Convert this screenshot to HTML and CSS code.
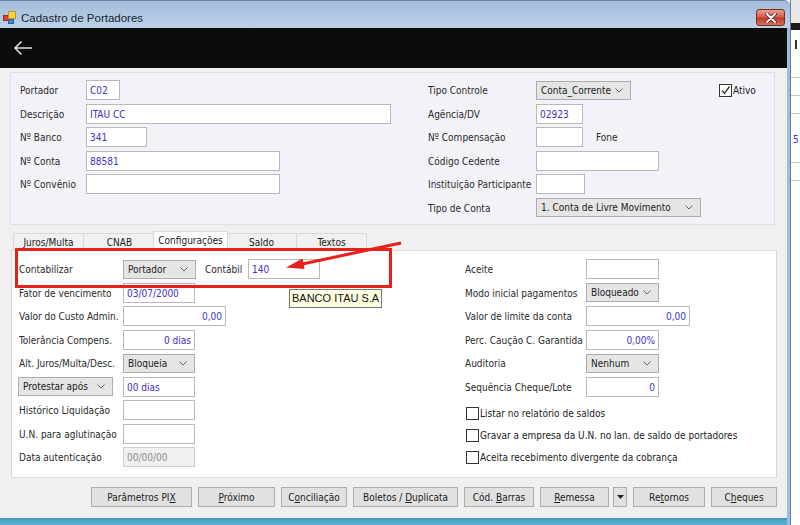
FILE: index.html
```html
<!DOCTYPE html>
<html lang="pt-BR">
<head>
<meta charset="utf-8">
<title>Cadastro de Portadores</title>
<link rel="stylesheet" href="styles.css">
</head>
<body>
<div class="screen">
  <div class="window">
    <div class="titlebar">
      <svg class="app-icon" width="13" height="13" viewBox="0 0 13 13">
        <rect x="0.5" y="4.5" width="5" height="5" fill="#d9412f" stroke="#9c2a1e"/>
        <rect x="5.5" y="0.5" width="7" height="7" fill="#f6d24a" stroke="#c79a1c"/>
        <rect x="5.5" y="8.5" width="5" height="4" fill="#4a86d6" stroke="#2c5ea6"/>
      </svg>
      <span class="title">Cadastro de Portadores</span>
      <div class="close-btn">
        <svg width="12" height="10" viewBox="0 0 12 10"><path d="M2 1 L10 9 M10 1 L2 9" stroke="#6b1d15" stroke-width="3.6" stroke-linecap="round"/><path d="M2 1 L10 9 M10 1 L2 9" stroke="#ffffff" stroke-width="2" stroke-linecap="round"/></svg>
      </div>
    </div>
    <div class="frame">
      <div class="toolbar">
        <svg class="back" width="20" height="16" viewBox="0 0 20 16"><path d="M19 8 H2 M8.5 1.5 L2 8 L8.5 14.5" fill="none" stroke="#dcdcdc" stroke-width="1.6"/></svg>
      </div>
      <div class="content">
        <div class="panel">
          <div class="pcol pleft">
            <label class="lbl">Portador</label><div class="in w34 val">C02</div>
            <label class="lbl">Descrição</label><div class="in w305 val">ITAU CC</div>
            <label class="lbl">Nº Banco</label><div class="in w61 val">341</div>
            <label class="lbl">Nº Conta</label><div class="in w194 val">88581</div>
            <label class="lbl">Nº Convênio</label><div class="in w194"></div>
          </div>
          <div class="pcol pright">
            <label class="lbl">Tipo Controle</label>
            <div class="inline">
              <div class="select w95"><span>Conta_Corrente</span><svg class="chev" width="8" height="5" viewBox="0 0 8 5"><path d="M0.5 0.5 L4 4 L7.5 0.5" fill="none" stroke="#666" stroke-width="1"/></svg></div>
              <div class="check ativo"><span class="cb"><svg width="11" height="11" viewBox="0 0 11 11"><path d="M2 5.5 L4.5 8.5 L9.5 1.5" fill="none" stroke="#333" stroke-width="1.3"/></svg></span><span>Ativo</span></div>
            </div>
            <label class="lbl">Agência/DV</label><div class="in w47 val">02923</div>
            <label class="lbl">Nº Compensação</label>
            <div class="inline"><div class="in w47"></div><span class="fone">Fone</span></div>
            <label class="lbl">Código Cedente</label><div class="in w123"></div>
            <label class="lbl">Instituição Participante</label><div class="in w49"></div>
            <label class="lbl">Tipo de Conta</label>
            <div class="select w165"><span>1. Conta de Livre Movimento</span><svg class="chev" width="8" height="5" viewBox="0 0 8 5"><path d="M0.5 0.5 L4 4 L7.5 0.5" fill="none" stroke="#666" stroke-width="1"/></svg></div>
          </div>
        </div>

        <div class="tabs">
          <div class="tab t1">Juros/Multa</div>
          <div class="tab t2">CNAB</div>
          <div class="tab t3 active">Configurações</div>
          <div class="tab t4">Saldo</div>
          <div class="tab t5">Textos</div>
        </div>

        <div class="tab-page">
          <div class="tcol tleft">
            <label class="lbl">Contabilizar</label>
            <div class="inline">
              <div class="select w73"><span>Portador</span><svg class="chev" width="8" height="5" viewBox="0 0 8 5"><path d="M0.5 0.5 L4 4 L7.5 0.5" fill="none" stroke="#666" stroke-width="1"/></svg></div>
              <span class="contabil">Contábil</span>
              <div class="in w72 val">140</div>
            </div>
            <label class="lbl">Fator de vencimento</label><div class="in w72 val">03/07/2000</div>
            <label class="lbl">Valor do Custo Admin.</label><div class="in w103 val right">0,00</div>
            <label class="lbl">Tolerância Compens.</label><div class="in w72 val right">0 dias</div>
            <label class="lbl">Alt. Juros/Multa/Desc.</label>
            <div class="select w72"><span>Bloqueia</span><svg class="chev" width="8" height="5" viewBox="0 0 8 5"><path d="M0.5 0.5 L4 4 L7.5 0.5" fill="none" stroke="#666" stroke-width="1"/></svg></div>
            <div class="select w95 protestar"><span>Protestar após</span><svg class="chev" width="8" height="5" viewBox="0 0 8 5"><path d="M0.5 0.5 L4 4 L7.5 0.5" fill="none" stroke="#666" stroke-width="1"/></svg></div>
            <div class="in w72 val">00 dias</div>
            <label class="lbl">Histórico Liquidação</label><div class="in w72"></div>
            <label class="lbl">U.N. para aglutinação</label><div class="in w72"></div>
            <label class="lbl">Data autenticação</label><div class="in w72 disabled">00/00/00</div>
          </div>
          <div class="tcol tright">
            <div class="rgrid">
              <label class="lbl">Aceite</label><div class="in w73"></div>
              <label class="lbl">Modo inicial pagamentos</label>
              <div class="select w73"><span>Bloqueado</span><svg class="chev" width="8" height="5" viewBox="0 0 8 5"><path d="M0.5 0.5 L4 4 L7.5 0.5" fill="none" stroke="#666" stroke-width="1"/></svg></div>
              <label class="lbl">Valor de limite da conta</label><div class="in w104 val right">0,00</div>
              <label class="lbl">Perc. Caução C. Garantida</label><div class="in w73 val right">0,00%</div>
              <label class="lbl">Auditoria</label>
              <div class="select w73"><span>Nenhum</span><svg class="chev" width="8" height="5" viewBox="0 0 8 5"><path d="M0.5 0.5 L4 4 L7.5 0.5" fill="none" stroke="#666" stroke-width="1"/></svg></div>
              <label class="lbl">Sequência Cheque/Lote</label><div class="in w73 val right">0</div>
            </div>
            <div class="checks">
              <div class="check"><span class="cb"></span><span>Listar no relatório de saldos</span></div>
              <div class="check"><span class="cb"></span><span>Gravar a empresa da U.N. no lan. de saldo de portadores</span></div>
              <div class="check"><span class="cb"></span><span>Aceita recebimento divergente da cobrança</span></div>
            </div>
          </div>
        </div>

        <div class="buttons">
          <div class="btn b-pix"><span>Parâmetros PI<u>X</u></span></div>
          <div class="btn b-prox"><span><u>P</u>róximo</span></div>
          <div class="btn b-conc"><span>C<u>o</u>nciliação</span></div>
          <div class="btn b-bol"><span>Boletos / <u>D</u>uplicata</span></div>
          <div class="btn b-cod"><span>Cód. <u>B</u>arras</span></div>
          <div class="btn b-rem"><span><u>R</u>emessa</span></div>
          <div class="btn b-drop"><svg width="7" height="4" viewBox="0 0 7 4"><path d="M0 0 H7 L3.5 4 Z" fill="#222"/></svg></div>
          <div class="btn b-ret"><span>Re<u>t</u>ornos</span></div>
          <div class="btn b-che"><span>C<u>h</u>eques</span></div>
        </div>
      </div>
      <div class="bottom-edge"></div>
    </div>
  </div>
  <div class="behind">
    <div class="bh-top"></div>
    <div class="bh-glyph"></div>
    <div class="bh-line first"></div>
    <div class="bh-line"></div>
    <div class="bh-line"></div>
    <div class="bh-text">5</div>
    <div class="bh-line"></div>
    <div class="bh-line"></div>
  </div>

  <div class="annot-rect"></div>
  <svg class="annot-arrow" width="130" height="40" viewBox="280 235 130 40">
    <line x1="401" y1="243" x2="300" y2="264.5" stroke="#e8201c" stroke-width="3"/>
    <polygon points="286,267.5 302.5,258.5 304.5,269" fill="#e8201c"/>
  </svg>
  <div class="tooltip">BANCO ITAU S.A</div>
</div>
</body>
</html>
```

FILE: styles.css
```css
* { box-sizing: border-box; }
html, body { margin: 0; padding: 0; }
body {
  width: 800px;
  height: 525px;
  overflow: hidden;
  background: #ffffff;
  font-family: "DejaVu Sans Condensed", "Liberation Sans", Arial, sans-serif;
  font-size: 10px;
  color: #222;
}
.screen { position: relative; display: flex; width: 800px; height: 525px; }

.window { width: 790px; height: 525px; display: flex; flex-direction: column; flex: none; }

.titlebar {
  height: 28px;
  flex: none;
  display: flex;
  align-items: center;
  padding: 6px 0 0 3px;
  background: linear-gradient(#a2bcd9, #bcd2ea);
  border-top: 1px solid #6f8398;
  border-top-right-radius: 6px;
}
.app-icon { flex: none; }
.title {
  margin-left: 5px;
  font-family: "Liberation Sans", Arial, sans-serif;
  font-size: 11.5px;
  color: #1b2430;
}
.close-btn {
  margin-left: auto;
  margin-right: 5px;
  width: 29px;
  height: 17px;
  border: 1px solid #7c2c23;
  border-radius: 3px;
  background: linear-gradient(#e7a08f 0%, #d0624f 45%, #bf3a27 55%, #d5705c 100%);
  display: flex;
  align-items: center;
  justify-content: center;
}

.frame {
  flex: 1;
  display: flex;
  flex-direction: column;
  background: #f0f0f0;
  border-right: 3px solid #9dbde0;
}
.toolbar {
  height: 40px;
  flex: none;
  background: #0c0c0c;
  display: flex;
  align-items: center;
  padding-left: 13px;
}

.content { flex: 1; padding: 4px 10px 0 10px; display: flex; flex-direction: column; }

/* top panel */
.panel {
  height: 153px;
  width: 765px;
  flex: none;
  display: flex;
  padding: 7px 0 0 9px;
  background: #f2f2f8;
  border: 1px solid #dedee6;
}
.pcol { display: grid; grid-auto-rows: 20px; row-gap: 3.5px; align-items: center; }
.pleft { width: 408px; grid-template-columns: 66px 1fr; }
.pright { width: 330px; grid-template-columns: 108px 1fr; }

.lbl { color: #2a2a2a; white-space: nowrap; padding-top: 1px; }
.inline { display: flex; align-items: center; height: 20px; }

.in {
  height: 20px;
  background: #ffffff;
  border: 1px solid #b9b9b9;
  padding: 0 3px;
  line-height: 19px;
  white-space: nowrap;
  overflow: hidden;
}
.in.val { color: #3a33c8; }
.in.right { text-align: right; }
.in.disabled { background: #f0f0f0; border-color: #cfcfcf; color: #8d8d8d; }

.select {
  height: 19px;
  background: #e5e5e5;
  border: 1px solid #adadad;
  display: flex;
  align-items: center;
  padding: 0 7px 0 4px;
  white-space: nowrap;
  color: #222;
}
.select span { flex: 1; line-height: 16px; padding-top: 1px; }
.chev { flex: none; }

.w34 { width: 34px; } .w47 { width: 47px; } .w49 { width: 49px; } .w61 { width: 61px; }
.w72 { width: 72px; } .w73 { width: 73px; } .w95 { width: 95px; } .w103 { width: 103px; }
.w104 { width: 104px; } .w123 { width: 123px; } .w165 { width: 165px; } .w194 { width: 194px; }
.w305 { width: 305px; }

.check { display: flex; align-items: center; white-space: nowrap; color: #222; }
.cb {
  width: 13px; height: 13px; flex: none;
  border: 1px solid #333;
  background: #fff;
  margin-right: 1px;
  display: flex; align-items: center; justify-content: center;
}
.ativo { margin-left: 88px; }
.fone { margin-left: 13px; color: #2a2a2a; }

/* tabs */
.tabs { height: 25px; flex: none; display: flex; align-items: flex-end; padding-left: 3px; }
.tab {
  height: 17px;
  border: 1px solid #d9d9d9;
  border-bottom: none;
  background: #f0f0f0;
  display: flex;
  align-items: center;
  justify-content: center;
  margin-right: -1px;
  color: #222;
  padding-top: 1px;
}
.t1 { width: 71px; } .t2 { width: 73px; } .t4 { width: 71px; } .t5 { width: 71px; }
.tab.active {
  width: 75px;
  height: 20px;
  margin: 0 -2px -1px -2px;
  background: #ffffff;
  position: relative;
  z-index: 1;
  align-items: flex-start;
  padding-top: 3px;
}

.tab-page {
  margin-left: 1px;
  width: 766px;
  height: 228px;
  flex: none;
  background: #ffffff;
  border: 1px solid #d9d9d9;
  padding: 8px 0 0 7px;
  display: flex;
}
.tcol { display: flex; flex-direction: column; }
.tleft {
  width: 446px;
  display: grid;
  grid-template-columns: 104px 1fr;
  grid-auto-rows: 20px;
  row-gap: 3.5px;
  align-items: center;
  align-content: start;
}
.rgrid {
  display: grid;
  grid-template-columns: 121px 1fr;
  grid-auto-rows: 20px;
  row-gap: 3.5px;
  align-items: center;
}
.contabil { margin-left: 9px; width: 43px; color: #2a2a2a; padding-top: 1px; }
.protestar { margin-left: -1px; }
.checks { display: flex; flex-direction: column; gap: 7px; margin-top: 9px; padding-left: 1px; }
.checks .check { height: 15px; }

/* buttons */
.buttons {
  height: 40px;
  flex: none;
  display: flex;
  justify-content: flex-end;
  align-items: flex-start;
  padding-top: 9px;
  gap: 6px;
}
.btn {
  height: 20px;
  background: #e1e1e1;
  border: 1px solid #adadad;
  display: flex;
  align-items: center;
  justify-content: center;
  color: #222;
  white-space: nowrap;
}
.b-pix { width: 101px; } .b-prox { width: 77px; } .b-conc { width: 66px; } .b-bol { width: 105px; }
.b-cod { width: 70px; } .b-rem { width: 69px; } .b-drop { width: 14px; margin-left: -2px; }
.b-ret { width: 72px; } .b-che { width: 66px; }

.bottom-edge { height: 7px; flex: none; background: linear-gradient(#3d9cc2, #5fb3d3); }

/* background window to the right */
.behind { flex: 1; background: #ffffff; border-left: 1px solid #6a7f96; display: flex; flex-direction: column; }
.bh-top { height: 30px; background: linear-gradient(#e8e8e8 0 23px, #1a1a1a 23px 30px); }
.bh-glyph { width: 2px; height: 9px; margin: 10px 0 0 4px; background: #333; }
.bh-line { height: 1px; background: #c8c8c8; margin-top: 17px; }
.bh-line.first { margin-top: 28px; }
.bh-text { margin-top: 20px; color: #3a33c8; font-size: 10px; padding-left: 2px; }

/* annotation overlays */
.annot-rect {
  position: absolute;
  left: 15px; top: 248px;
  width: 377px; height: 40px;
  border: 3px solid #e8201c;
  z-index: 5;
}
.annot-arrow { position: absolute; left: 280px; top: 235px; z-index: 6; }
.tooltip {
  position: absolute;
  left: 289px; top: 289px;
  width: 93px; height: 19px;
  background: #ffffe1;
  border: 1px solid #767676;
  font-family: "Liberation Sans", Arial, sans-serif;
  font-size: 11px;
  color: #111;
  padding-left: 2px;
  line-height: 17px;
  z-index: 4;
}
```
